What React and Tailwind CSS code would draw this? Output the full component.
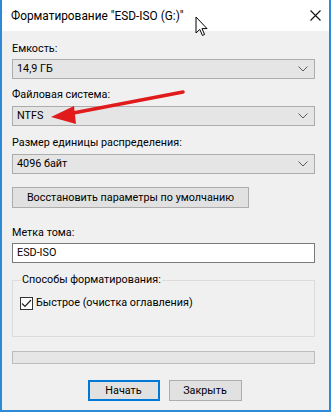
import React from "react";

const FONT = { fontFamily: 'Roboto, "Noto Sans", "Liberation Sans", sans-serif' };

const Chevron = () => (
  <svg width="10" height="6" viewBox="0 0 10 6" className="shrink-0">
    <path d="M0.5 0.5 L5 5 L9.5 0.5" fill="none" stroke="#5a5a5a" strokeWidth="1" />
  </svg>
);

const Combo = ({ value, className = "" }) => (
  <div
    className={`h-[20px] flex items-center justify-between pl-[4px] pr-[6px] bg-[#e5e5e5] border border-[#adadad] text-[10.8px] leading-[14px] text-black ${className}`}
  >
    <span>{value}</span>
    <Chevron />
  </div>
);

const Label = ({ children, className = "" }) => (
  <div className={`text-[10.8px] leading-[14px] text-black whitespace-nowrap ${className}`}>{children}</div>
);

export default function App() {
  return (
    <div
      className="relative w-[331px] h-[412px] flex flex-col border-x-2 border-b-2 border-[#2d8ad6] bg-white overflow-hidden"
      style={FONT}
    >
      {/* title bar */}
      <div className="h-[31px] shrink-0 flex items-center justify-between pl-[9px] pr-[8px] bg-white">
        <span className="text-[11.85px] text-black leading-[18px] whitespace-nowrap">
          Форматирование "ESD-ISO (G:)"
        </span>
        <svg width="11" height="11" viewBox="0 0 11 11">
          <path d="M0.5 0.5 L10.5 10.5 M10.5 0.5 L0.5 10.5" stroke="#111" strokeWidth="1.1" />
        </svg>
      </div>

      {/* body */}
      <div className="flex-1 flex flex-col bg-[#f0f0f0] pl-[10px] pr-[14px]">
        <Label className="mt-[11px]">Емкость:</Label>
        <Combo value="14,9 ГБ" className="mt-[3px]" />

        <Label className="mt-[9px]">Файловая система:</Label>
        <Combo value="NTFS" className="mt-[4px]" />

        <Label className="mt-[10px]">Размер единицы распределения:</Label>
        <Combo value="4096 байт" className="mt-[4px]" />

        <button className="mt-[13px] h-[21px] w-[237px] bg-[#e1e1e1] border border-[#adadad] text-[10.8px] leading-[14px] text-black whitespace-nowrap">
          Восстановить параметры по умолчанию
        </button>

        <Label className="mt-[18px]">Метка тома:</Label>
        <div className="mt-[3px] h-[20px] flex items-center pl-[4px] bg-white border border-[#7a7a7a] text-[10.8px] leading-[14px] text-black">
          ESD-ISO
        </div>

        <fieldset className="mt-[10px] border border-[#dcdcdc] pl-[7px] pb-[26px]">
          <legend className="ml-[1px] px-[1px] text-[10.8px] leading-[14px] text-black">
            Способы форматирования:
          </legend>
          <div className="mt-[9px] flex items-center gap-[3px]">
            <div className="w-[13px] h-[13px] bg-white border border-[#333] flex items-center justify-center">
              <svg width="11" height="9" viewBox="0 0 11 9">
                <path d="M1 4.5 L4 7.5 L10 1" fill="none" stroke="#222" strokeWidth="1.2" />
              </svg>
            </div>
            <span className="text-[10.8px] leading-[14px] text-black whitespace-nowrap">
              Быстрое (очистка оглавления)
            </span>
          </div>
        </fieldset>

        <div className="mt-[14px] h-[13px] bg-[#e6e6e6] border border-[#bcbcbc]" />

        <div className="mt-[16px] flex justify-center gap-[9px] pl-[2px]">
          <button className="w-[72px] h-[21px] bg-[#e1e1e1] border-2 border-[#0078d7] text-[10.8px] leading-[14px] text-black">
            Начать
          </button>
          <button className="w-[73px] h-[21px] bg-[#e1e1e1] border border-[#adadad] text-[10.8px] leading-[14px] text-black">
            Закрыть
          </button>
        </div>
      </div>

      {/* annotation arrow */}
      <svg className="absolute left-0 top-0 pointer-events-none" width="331" height="412">
        <path d="M181 92 L66 114" stroke="#e11b1b" strokeWidth="3.5" strokeLinecap="round" />
        <path d="M49 117 L72 106 L74 124 Z" fill="#e11b1b" />
      </svg>

      {/* mouse cursor */}
      <svg className="absolute left-[193px] top-[16px] pointer-events-none" width="14" height="21" viewBox="0 0 14 21">
        <path
          d="M1 1 L1 17 L4.8 13.4 L7.4 19.4 L9.6 18.5 L7 12.6 L12 12.6 Z"
          fill="#fff"
          stroke="#000"
          strokeWidth="1"
          strokeLinejoin="miter"
        />
      </svg>
    </div>
  );
}
